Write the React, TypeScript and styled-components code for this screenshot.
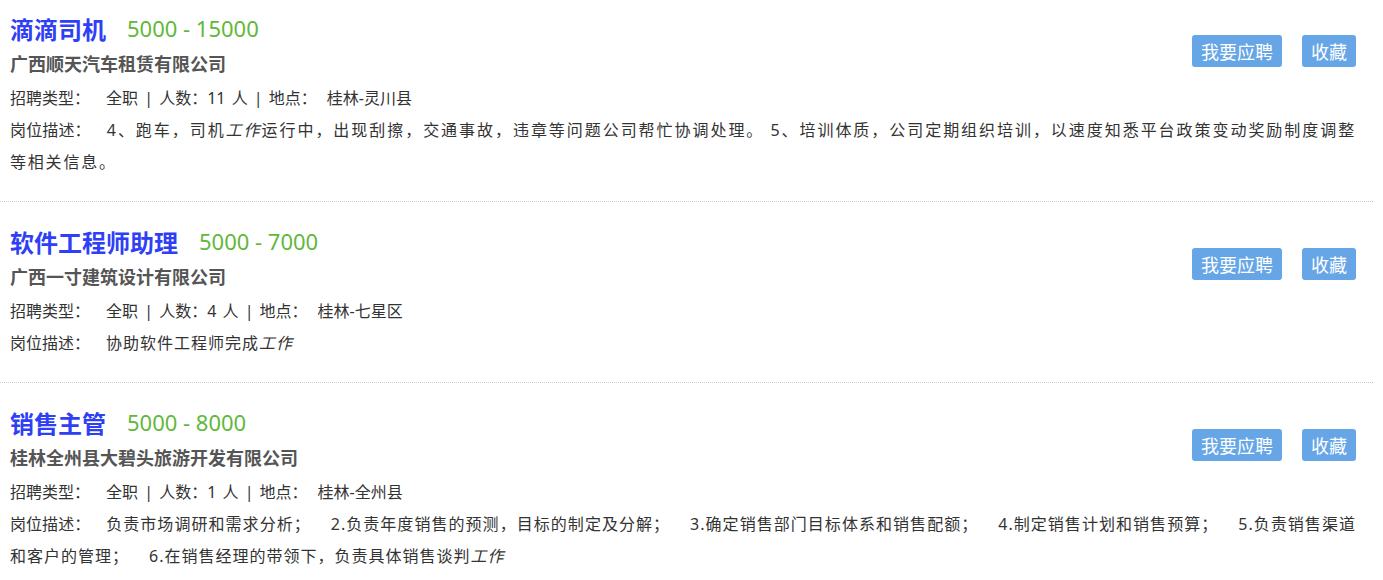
import styled, { createGlobalStyle } from "styled-components";

const GlobalStyle = createGlobalStyle`
  body {
    margin: 0;
    background: #fff;
    font-family: "Noto Sans", "Noto Sans CJK SC", sans-serif;
    color: #333;
  }
`;

const List = styled.ul`
  list-style: none;
  margin: 0;
  padding: 0;
  width: 1373px;
`;

const Item = styled.li`
  padding: 21px 17px 23px 10px;
  border-bottom: 1px dotted #c8c8c8;

  &:first-child {
    padding-top: 10px;
  }
`;

const Top = styled.div`
  display: flex;
  justify-content: space-between;
  align-items: flex-start;
`;

const Info = styled.div`
  display: flex;
  flex-direction: column;
`;

const TitleRow = styled.div`
  display: flex;
  align-items: center;
  height: 36px;
`;

const JobName = styled.a`
  font-family: "Noto Sans CJK SC", sans-serif;
  font-size: 24px;
  font-weight: bold;
  color: #2f3ff5;
  text-decoration: none;
  cursor: pointer;
`;

const Salary = styled.span`
  font-size: 22px;
  color: #5fb83a;
  margin-left: 21px;
`;

const Company = styled.div`
  font-family: "Noto Sans CJK SC", sans-serif;
  font-size: 18px;
  font-weight: bold;
  color: #555;
  line-height: 34px;
`;

const Line = styled.div`
  margin-top: 2px;
  font-size: 16px;
  line-height: 32px;
  word-spacing: 2px;
`;

const Label = styled.span<{ $gap?: number }>`
  margin-right: ${(p) => p.$gap ?? 16}px;
  letter-spacing: 0;
`;

const Desc = styled.p<{ $ls: number }>`
  margin: 0;
  font-size: 16px;
  line-height: 32px;
  text-align: justify;
  letter-spacing: ${(p) => p.$ls}px;

  em {
    font-style: italic;
  }
`;

const Sep = styled.span`
  display: inline-block;
  width: 20px;
`;

const Actions = styled.div`
  display: flex;
  gap: 20px;
  margin-top: 25px;
`;

const Button = styled.button`
  height: 32px;
  padding: 0 9px;
  border: none;
  border-radius: 3px;
  background: #66a6e6;
  color: #fff;
  font-family: "Noto Sans CJK SC", sans-serif;
  font-size: 18px;
  cursor: pointer;
`;

interface IJob {
  name: string;
  salary: string;
  company: string;
  count: number;
  place: string;
  spacing: number;
  desc: React.ReactNode;
}

const jobs: IJob[] = [
  {
    name: "滴滴司机",
    salary: "5000 - 15000",
    company: "广西顺天汽车租赁有限公司",
    count: 11,
    place: "桂林-灵川县",
    spacing: 1.8,
    desc: (
      <>
        4、跑车，司机<em>工作</em>运行中，出现刮擦，交通事故，违章等问题公司帮忙协调处理。 5、培训体质，公司定期组织培训，以速度知悉平台政策变动奖励制度调整等相关信息。
      </>
    ),
  },
  {
    name: "软件工程师助理",
    salary: "5000 - 7000",
    company: "广西一寸建筑设计有限公司",
    count: 4,
    place: "桂林-七星区",
    spacing: 1,
    desc: (
      <>
        协助软件工程师完成<em>工作</em>
      </>
    ),
  },
  {
    name: "销售主管",
    salary: "5000 - 8000",
    company: "桂林全州县大碧头旅游开发有限公司",
    count: 1,
    place: "桂林-全州县",
    spacing: 1,
    desc: (
      <>
        负责市场调研和需求分析；<Sep />2.负责年度销售的预测，目标的制定及分解；<Sep />3.确定销售部门目标体系和销售配额；<Sep />4.制定销售计划和销售预算；<Sep />5.负责销售渠道和客户的管理；<Sep />6.在销售经理的带领下，负责具体销售谈判<em>工作</em>
      </>
    ),
  },
];

function App() {
  return (
    <>
      <GlobalStyle />
      <List>
        {jobs.map((job) => (
          <Item key={job.name}>
            <Top>
              <Info>
                <TitleRow>
                  <JobName>{job.name}</JobName>
                  <Salary>{job.salary}</Salary>
                </TitleRow>
                <Company>{job.company}</Company>
                <Line>
                  <Label>招聘类型：</Label>全职 | 人数：{job.count} 人 | 地点：
                  <Label $gap={10} />
                  {job.place}
                </Line>
              </Info>
              <Actions>
                <Button>我要应聘</Button>
                <Button>收藏</Button>
              </Actions>
            </Top>
            <Desc $ls={job.spacing}>
              <Label>岗位描述：</Label>
              {job.desc}
            </Desc>
          </Item>
        ))}
      </List>
    </>
  );
}

export default App;
